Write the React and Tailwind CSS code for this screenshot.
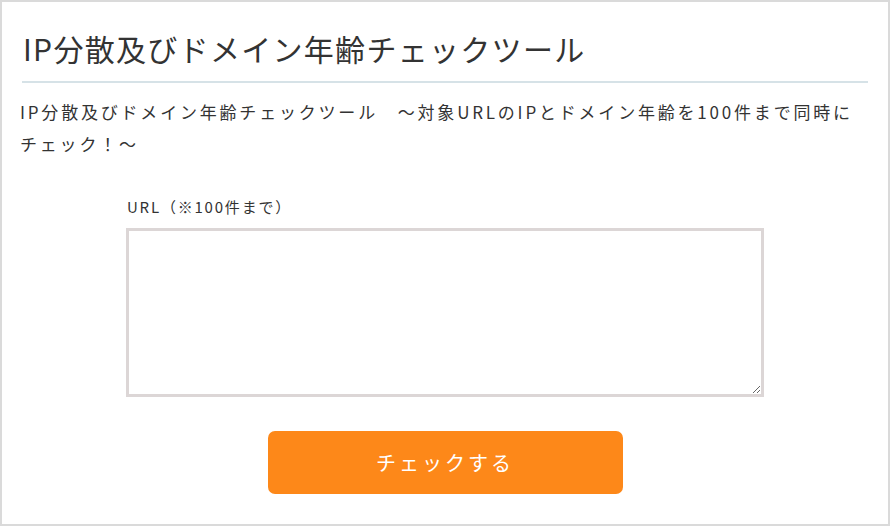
export default function App() {
  return (
    <div
      className="w-[890px] h-[526px] bg-white border-2 border-[#dadada] text-[#333] overflow-hidden"
      style={{ fontFamily: '"Noto Sans CJK JP", "Noto Sans", sans-serif' }}
    >
      <div className="px-5">
        <h1 className="pt-[25px] pb-[12px] text-[30px] leading-[42px] tracking-[1.3px] border-b-2 border-[#d6e2e7] pl-[1px]">
          IP分散及びドメイン年齢チェックツール
        </h1>
        <p className="mt-[13px] text-[17px] leading-[32px] tracking-[2.8px] -ml-[2px] -mr-[20px]">
          IP分散及びドメイン年齢チェックツール　～対象URLのIPとドメイン年齢を100件まで同時に
          <br />
          チェック！～
        </p>
      </div>
      <div className="flex flex-col items-center mt-[37px]">
        <div className="w-[638px]">
          <label className="block text-[15px] leading-[20px] tracking-[1.8px] pl-[1px]">URL（※100件まで）</label>
          <textarea className="mt-[11px] block w-[638px] h-[169px] border-[3px] border-[#dcd6d6] bg-white outline-none" />
        </div>
        <button className="mt-[34px] w-[355px] h-[63px] rounded-[7px] bg-[#fd8819] text-white text-[20px] tracking-[3px]">
          チェックする
        </button>
      </div>
    </div>
  );
}
